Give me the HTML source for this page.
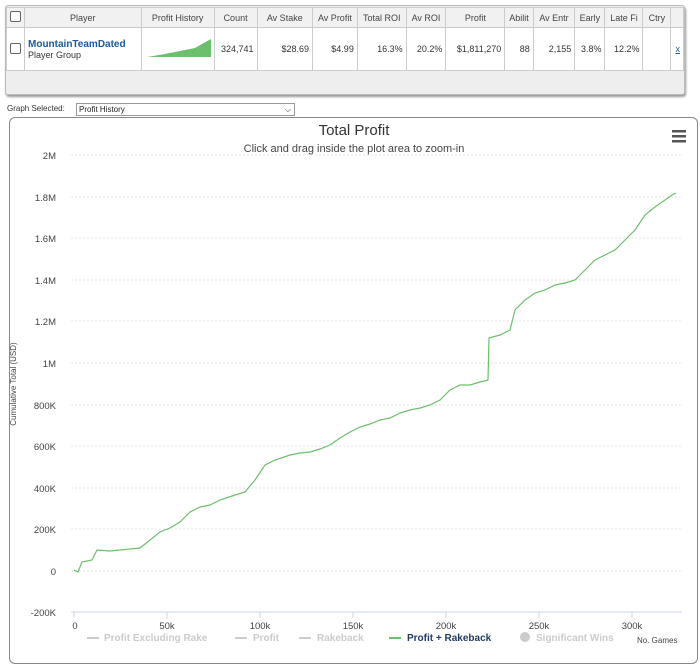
<!DOCTYPE html>
<html><head><style>
body{margin:0;width:700px;height:667px;background:#fff;font-family:"Liberation Sans",sans-serif;position:relative;overflow:hidden}
.tb{position:absolute;left:5px;top:5px;width:678px;height:88px;border:1px solid #bbb;border-radius:3px;background:#eee;box-shadow:1px 2px 2px #999}
table{border-collapse:collapse;font-size:9px;color:#333;position:absolute;left:0;top:1px}
td{border:1px solid #ccc;padding:0 3px;white-space:nowrap;overflow:hidden}
tr.h td{height:19px;background:#f1f1f1;text-align:center;color:#444}
tr.d td{height:42px;background:#fff;text-align:right}
.cb{width:9px;height:9px;border:1px solid #666;border-radius:2px;background:#fff;display:inline-block}
.chart{position:absolute;left:9px;top:117px;width:687px;height:545px;border:1px solid #888;border-radius:6px}
</style></head><body>
<div class="tb">
<table>
<tr class="h"><td style="width:9px"><span class="cb"></span></td><td style="width:113px">Player</td><td style="width:66px">Profit History</td><td style="width:37px">Count</td><td style="width:52px">Av Stake</td><td style="width:39px">Av Profit</td><td style="width:43px">Total ROI</td><td style="width:34px">Av ROI</td><td style="width:54px">Profit</td><td style="width:22px">Abilit</td><td style="width:36px">Av Entr</td><td style="width:24px">Early</td><td style="width:32px">Late Fi</td><td style="width:22px">Ctry</td><td style="width:6px"></td></tr>
<tr class="d"><td><span class="cb"></span></td><td style="text-align:left"><b style="color:#1a5a9e;font-size:10px">MountainTeamDated</b><br>Player Group</td><td style="text-align:center"><svg width="66" height="20"><polygon points="2,19 20,16 35,13 50,10 57,6 66,1 66,19" fill="#6cbf6c"/></svg></td><td>324,741</td><td>$28.69</td><td>$4.99</td><td>16.3%</td><td>20.2%</td><td>$1,811,270</td><td>88</td><td>2,155</td><td>3.8%</td><td>12.2%</td><td></td><td style="color:#1a5a9e;text-decoration:underline">x</td></tr>
</table>
</div>
<div style="position:absolute;left:7px;top:104px;font-size:8px;color:#333">Graph Selected:</div>
<div style="position:absolute;left:76px;top:103px;width:215px;height:11px;border:1px solid #999;font-size:8px;line-height:11px;padding-left:2px;color:#222">Profit History<span style="position:absolute;right:3px;top:0;font-size:8px">&#x2335;</span></div>
<div class="chart"></div>
<svg style="position:absolute;left:0;top:0" width="700" height="667">
<g stroke="#e6e6e6" stroke-dasharray="2,2">
<line x1="71" x2="682" y1="155" y2="155"/><line x1="71" x2="682" y1="197" y2="197"/><line x1="71" x2="682" y1="238" y2="238"/><line x1="71" x2="682" y1="280" y2="280"/><line x1="71" x2="682" y1="321" y2="321"/><line x1="71" x2="682" y1="363" y2="363"/><line x1="71" x2="682" y1="405" y2="405"/><line x1="71" x2="682" y1="446" y2="446"/><line x1="71" x2="682" y1="488" y2="488"/><line x1="71" x2="682" y1="529" y2="529"/><line x1="71" x2="682" y1="571" y2="571"/>
</g>
<line x1="71" x2="682" y1="612" y2="612" stroke="#ccd6eb"/>
<g stroke="#ccd6eb"><line x1="74" x2="74" y1="612" y2="618"/><line x1="167" x2="167" y1="612" y2="618"/><line x1="260" x2="260" y1="612" y2="618"/><line x1="353" x2="353" y1="612" y2="618"/><line x1="446" x2="446" y1="612" y2="618"/><line x1="539" x2="539" y1="612" y2="618"/><line x1="632" x2="632" y1="612" y2="618"/></g>
<g font-size="9.5" fill="#444" text-anchor="end" font-family="Liberation Sans">
<text x="56" y="159">2M</text><text x="56" y="201">1.8M</text><text x="56" y="242">1.6M</text><text x="56" y="284">1.4M</text><text x="56" y="325">1.2M</text><text x="56" y="367">1M</text><text x="56" y="409">800K</text><text x="56" y="450">600K</text><text x="56" y="492">400K</text><text x="56" y="533">200K</text><text x="56" y="575">0</text><text x="56" y="616">-200K</text>
</g>
<g font-size="9.5" fill="#444" text-anchor="middle" font-family="Liberation Sans">
<text x="75" y="629">0</text><text x="167" y="629">50k</text><text x="260" y="629">100k</text><text x="353" y="629">150k</text><text x="446" y="629">200k</text><text x="539" y="629">250k</text><text x="632" y="629">300k</text>
</g>
<text x="16" y="384" font-size="8" fill="#444" transform="rotate(-90 16 384)" text-anchor="middle" font-family="Liberation Sans">Cumulative Total (USD)</text>
<text x="354" y="135" font-size="15" fill="#333" text-anchor="middle" font-family="Liberation Sans">Total Profit</text>
<text x="354" y="152" font-size="11" fill="#444" text-anchor="middle" font-family="Liberation Sans">Click and drag inside the plot area to zoom-in</text>
<g fill="#555"><rect x="672" y="130" width="14" height="2.5"/><rect x="672" y="135" width="14" height="2.5"/><rect x="672" y="140" width="14" height="2.5"/></g>
<polyline fill="none" stroke="#6cbf6c" stroke-width="1.2" points="74,570 78,572 82,562 92,560 97,550 110,551 120,550 130,549 140,548 150,540 160,532 170,528 180,522 190,512 200,507 210,505 220,500 235,495 245,492 255,480 265,465 275,460 290,455 300,453 310,452 320,449 330,445 340,438 350,432 360,427 370,424 380,420 390,418 400,413 410,410 420,408 430,405 440,400 450,390 460,385 470,385 480,382 488,380 489,338 500,335 510,330 515,310 525,300 535,293 545,290 555,285 565,283 575,280 585,270 595,260 605,255 615,250 625,240 635,230 645,215 655,207 665,200 672,195 676,193"/>
<g font-size="10" font-weight="bold" font-family="Liberation Sans">
<line x1="87" x2="99" y1="638" y2="638" stroke="#ccc" stroke-width="2"/><text x="104" y="641" fill="#ccc">Profit Excluding Rake</text>
<line x1="235" x2="247" y1="638" y2="638" stroke="#ccc" stroke-width="2"/><text x="253" y="641" fill="#ccc">Profit</text>
<line x1="299" x2="311" y1="638" y2="638" stroke="#ccc" stroke-width="2"/><text x="317" y="641" fill="#ccc">Rakeback</text>
<line x1="389" x2="401" y1="638" y2="638" stroke="#6cbf6c" stroke-width="2"/><text x="407" y="641" fill="#1f3a5e">Profit + Rakeback</text>
<circle cx="525" cy="637" r="5" fill="#ccc"/><text x="536" y="641" fill="#ccc">Significant Wins</text>
</g>
<text x="637" y="643" font-size="8" fill="#444" font-family="Liberation Sans">No. Games</text>
</svg>
</body></html>
